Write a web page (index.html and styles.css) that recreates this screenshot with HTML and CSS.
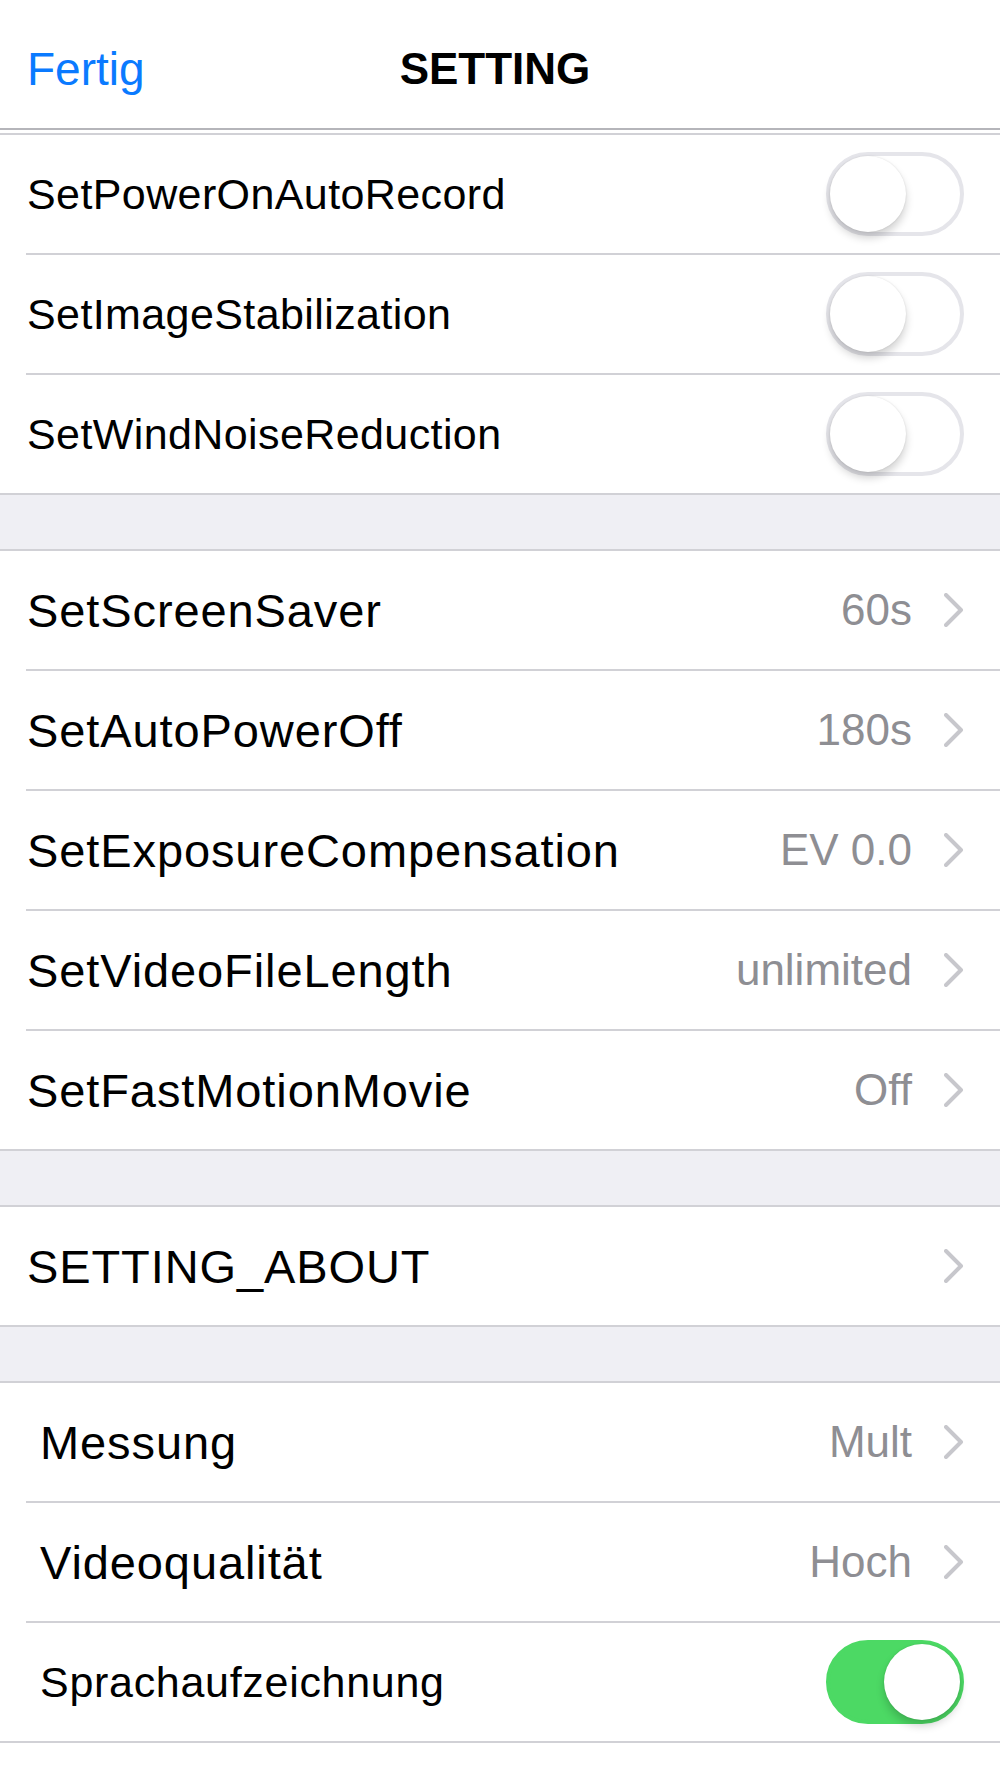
FILE: index.html
```html
<!DOCTYPE html>
<html lang="de">
<head>
    <meta charset="UTF-8">
    <meta name="viewport" content="width=device-width, initial-scale=1.0">
    <title>SETTING</title>
    <link rel="stylesheet" href="styles.css">
</head>
<body>
    <div class="navbar">
        <a class="nav-left" href="#">Fertig</a>
        <div class="nav-title">SETTING</div>
        <div class="nav-right"></div>
    </div>

    <div class="section first">
        <div class="row">
            <span class="label small">SetPowerOnAutoRecord</span>
            <div class="switch"><div class="thumb"></div></div>
        </div>
        <div class="row">
            <span class="label small">SetImageStabilization</span>
            <div class="switch"><div class="thumb"></div></div>
        </div>
        <div class="row">
            <span class="label small">SetWindNoiseReduction</span>
            <div class="switch"><div class="thumb"></div></div>
        </div>
    </div>

    <div class="gap"></div>

    <div class="section">
        <div class="row">
            <span class="label">SetScreenSaver</span>
            <span class="value">60s</span>
            <svg class="chevron" viewBox="0 0 20 34"><polyline points="2,2 17,17 2,32"/></svg>
        </div>
        <div class="row">
            <span class="label">SetAutoPowerOff</span>
            <span class="value">180s</span>
            <svg class="chevron" viewBox="0 0 20 34"><polyline points="2,2 17,17 2,32"/></svg>
        </div>
        <div class="row">
            <span class="label">SetExposureCompensation</span>
            <span class="value">EV 0.0</span>
            <svg class="chevron" viewBox="0 0 20 34"><polyline points="2,2 17,17 2,32"/></svg>
        </div>
        <div class="row">
            <span class="label">SetVideoFileLength</span>
            <span class="value">unlimited</span>
            <svg class="chevron" viewBox="0 0 20 34"><polyline points="2,2 17,17 2,32"/></svg>
        </div>
        <div class="row">
            <span class="label">SetFastMotionMovie</span>
            <span class="value">Off</span>
            <svg class="chevron" viewBox="0 0 20 34"><polyline points="2,2 17,17 2,32"/></svg>
        </div>
    </div>

    <div class="gap"></div>

    <div class="section">
        <div class="row">
            <span class="label">SETTING_ABOUT</span>
            <svg class="chevron" viewBox="0 0 20 34"><polyline points="2,2 17,17 2,32"/></svg>
        </div>
    </div>

    <div class="gap"></div>

    <div class="section indented">
        <div class="row">
            <span class="label">Messung</span>
            <span class="value">Mult</span>
            <svg class="chevron" viewBox="0 0 20 34"><polyline points="2,2 17,17 2,32"/></svg>
        </div>
        <div class="row">
            <span class="label">Videoqualität</span>
            <span class="value">Hoch</span>
            <svg class="chevron" viewBox="0 0 20 34"><polyline points="2,2 17,17 2,32"/></svg>
        </div>
        <div class="row">
            <span class="label small">Sprachaufzeichnung</span>
            <div class="switch on"><div class="thumb"></div></div>
        </div>
    </div>
</body>
</html>
```

FILE: styles.css
```css
body {
    font-family: "Liberation Sans", Arial, sans-serif;
    margin: 0;
    background-color: white;
    color: black;
}
.navbar {
    height: 130px;
    box-sizing: border-box;
    padding: 10px 27px 0 27px;
    display: grid;
    grid-template-columns: 1fr auto 1fr;
    align-items: center;
    border-bottom: 2px solid #b5b5ba;
}
.nav-left {
    color: #0a7aff;
    font-size: 46px;
    text-decoration: none;
}
.nav-title {
    font-size: 44px;
    font-weight: bold;
    margin-right: 10px;
}
.section {
    border-top: 2px solid #d1d1d6;
    border-bottom: 2px solid #d1d1d6;
}
.section.first {
    margin-top: 3px;
}
.gap {
    height: 54px;
    background-color: #efeff4;
}
.row {
    height: 118px;
    margin-left: 26px;
    padding: 0 36px 0 1px;
    display: flex;
    align-items: center;
    border-bottom: 2px solid #d1d1d6;
}
.row:last-child {
    border-bottom: none;
}
.indented .label {
    margin-left: 13px;
}
.label {
    flex: 1;
    font-size: 47px;
    letter-spacing: 0.9px;
    white-space: nowrap;
}
.label.small {
    font-size: 43px;
    letter-spacing: 0.4px;
}
.indented .label.small {
    letter-spacing: 0.7px;
}
.value {
    font-size: 44px;
    color: #8e8e93;
    margin-right: 32px;
}
.chevron {
    width: 20px;
    height: 34px;
    fill: none;
    stroke: #c7c7cc;
    stroke-width: 4;
    stroke-linecap: round;
    stroke-linejoin: round;
}
.switch {
    width: 138px;
    height: 84px;
    box-sizing: border-box;
    border-radius: 42px;
    border: 4px solid #e5e5ea;
    background-color: white;
    position: relative;
}
.switch .thumb {
    position: absolute;
    top: 0;
    left: 0;
    width: 76px;
    height: 76px;
    border-radius: 50%;
    background-color: white;
    box-shadow: 0 6px 8px rgba(0, 0, 0, 0.18), 0 0 2px rgba(0, 0, 0, 0.12);
}
.switch.on {
    background-color: #4cd964;
    border-color: #4cd964;
}
.switch.on .thumb {
    left: auto;
    right: 0;
}
```
